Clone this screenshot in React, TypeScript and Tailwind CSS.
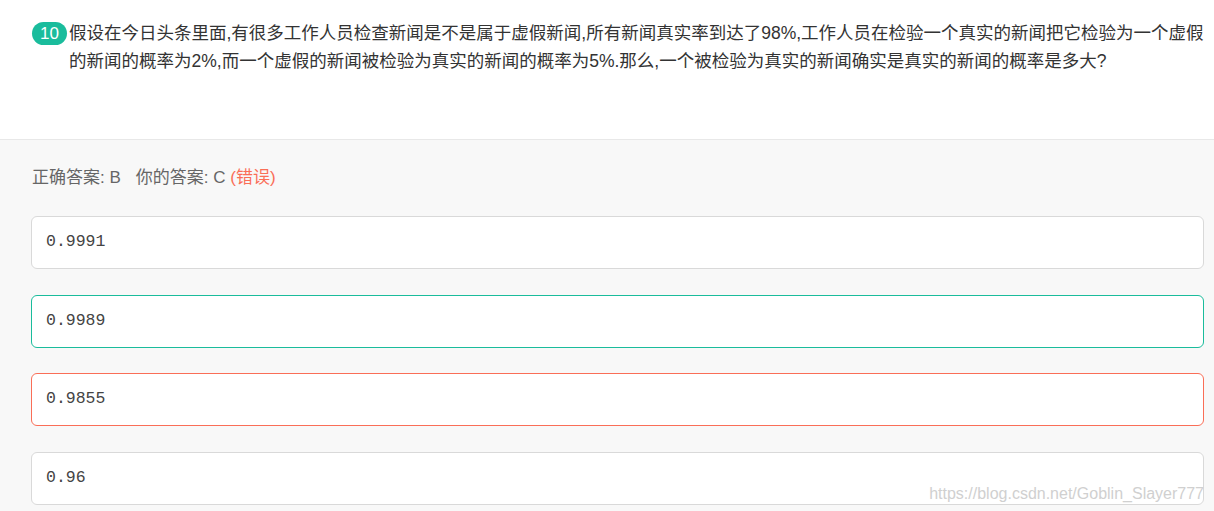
import React from "react";

const options = [
  { text: "0.9991", state: "none" },
  { text: "0.9989", state: "right" },
  { text: "0.9855", state: "wrong" },
  { text: "0.96", state: "none" },
];

const borderFor: Record<string, string> = {
  none: "border-[#d9d9d9]",
  right: "border-[#1abc9c]",
  wrong: "border-[#fa6e57]",
};

export default function App() {
  return (
    <div className="relative w-[1214px] h-[511px] overflow-hidden bg-[#f8f8f8] font-['Liberation_Sans','Noto_Sans_CJK_SC',sans-serif]">
      {/* Question */}
      <div className="h-[140px] bg-white border-b border-[#e8e8e8] pt-[19px] pr-[6px] flex items-start">
        <span className="ml-[32px] mr-[2px] mt-[3px] shrink-0 w-[35px] h-[23px] rounded-full bg-[#1abc9c] text-white text-[17px] leading-[23px] text-center">
          10
        </span>
        <p className="text-[17.5px] leading-[28px] text-[#333]">
          假设在今日头条里面,有很多工作人员检查新闻是不是属于虚假新闻,所有新闻真实率到达了98%,工作人员在检验一个真实的新闻把它检验为一个虚假的新闻的概率为2%,而一个虚假的新闻被检验为真实的新闻的概率为5%.那么,一个被检验为真实的新闻确实是真实的新闻的概率是多大?
        </p>
      </div>

      {/* Answer */}
      <div className="pl-[31px] pr-[10px] pt-[26px]">
        <div className="text-[17px] leading-[24px] text-[#666] pl-[1px]">
          正确答案: B<span className="inline-block w-[15px]" />你的答案: C{" "}
          <span className="text-[#fa6e57]">(错误)</span>
        </div>
        <div className="mt-[26px] flex flex-col gap-[25.5px]">
          {options.map((o) => (
            <div
              key={o.text}
              className={`h-[53px] rounded-[6px] border bg-white flex items-center pl-[14px] ${borderFor[o.state]}`}
            >
              <span className="font-['Liberation_Mono',monospace] text-[16.5px] text-[#444]">{o.text}</span>
            </div>
          ))}
        </div>
      </div>

      <div className="absolute right-[10px] top-[482px] text-[16px] text-[#d0d0d0] font-['Liberation_Sans',sans-serif]">
        https://blog.csdn.net/Goblin_Slayer777
      </div>
    </div>
  );
}
